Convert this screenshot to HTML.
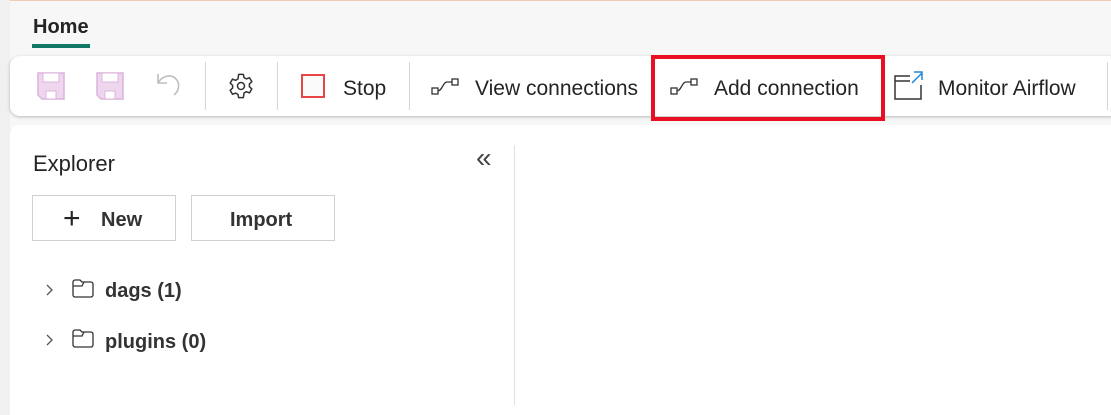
<!DOCTYPE html>
<html><head><style>
*{margin:0;padding:0;box-sizing:border-box}
body{width:1111px;height:404px;overflow:hidden;background:#f0f0f0;font-family:"Liberation Sans",sans-serif;color:#242424;position:relative}
.top{position:absolute;left:10px;top:0;right:0;height:130px;background:#f7f7f7;border-top:1px solid #f3c8b8}
.abs{position:absolute}
.t{position:absolute;font-size:21px;line-height:24px;white-space:nowrap}
.sep{position:absolute;top:62px;width:1px;height:48px;background:#d6d6d6}
.b{font-weight:bold;font-size:19px;color:#333}
</style></head><body>
<div class="top"></div>
<div class="t" style="left:33px;top:15px;font-weight:bold;font-size:20px">Home</div>
<div class="abs" style="left:32px;top:44px;width:58px;height:4px;background:#117865"></div>
<div class="abs" style="left:10px;top:56px;width:1110px;height:60px;background:#fff;border-radius:10px;box-shadow:0 1px 3px rgba(0,0,0,.25)"></div>
<svg class="abs" style="left:37px;top:72px" width="28" height="28" viewBox="0 0 28 28"><path d="M1 1h26v26H5l-4-4z" fill="#efd6ef" stroke="#dcb4dc" stroke-width="1.5"/><rect x="6" y="1" width="16" height="9" fill="#fff" stroke="#dcb4dc"/><rect x="9" y="19" width="10" height="8" fill="#fff" stroke="#dcb4dc"/></svg>
<svg class="abs" style="left:96px;top:72px" width="28" height="28" viewBox="0 0 28 28"><path d="M1 1h26v26H5l-4-4z" fill="#efd6ef" stroke="#dcb4dc" stroke-width="1.5"/><rect x="6" y="1" width="16" height="9" fill="#fff" stroke="#dcb4dc"/><rect x="9" y="19" width="10" height="8" fill="#fff" stroke="#dcb4dc"/></svg>
<svg class="abs" style="left:156px;top:72px" width="26" height="28" viewBox="0 0 26 28"><path d="M2 2v9h9M2 11C6 4 14 2 19 6c5 4 5 12-1 17" fill="none" stroke="#bdbdbd" stroke-width="1.6"/></svg>
<div class="sep" style="left:205px"></div>
<svg class="abs" style="left:227px;top:72px" width="28" height="28" viewBox="0 0 24 24"><path d="M10 2h4l.6 2.8 2 1.1 2.7-1 2 3.4-2.1 1.9v2.4l2.1 1.9-2 3.4-2.7-1-2 1.1L14 22h-4l-.6-2.8-2-1.1-2.7 1-2-3.4 2.1-1.9V11.4L2.7 9.5l2-3.4 2.7 1 2-1.1z" fill="none" stroke="#333" stroke-width="1.3" stroke-linejoin="round"/><circle cx="12" cy="12" r="3" fill="none" stroke="#333" stroke-width="1.3"/></svg>
<div class="sep" style="left:277px"></div>
<div class="abs" style="left:301px;top:74px;width:24px;height:24px;border:2px solid #e84545;background:#fafafa"></div>
<div class="t" style="left:343px;top:77px">Stop</div>
<div class="sep" style="left:409px"></div>
<svg class="abs" style="left:431px;top:78px" width="28" height="18" viewBox="0 0 28 18"><rect x="1" y="10" width="6" height="6" fill="none" stroke="#333" stroke-width="1.3"/><rect x="21" y="1" width="6" height="6" fill="none" stroke="#333" stroke-width="1.3"/><path d="M7 13c4 0 5-9 9-9h5" fill="none" stroke="#333" stroke-width="1.3"/></svg>
<div class="t" style="left:475px;top:77px">View connections</div>
<div class="abs" style="left:651px;top:55px;width:234px;height:66px;border:4px solid #e81123"></div>
<svg class="abs" style="left:670px;top:78px" width="28" height="18" viewBox="0 0 28 18"><rect x="1" y="10" width="6" height="6" fill="none" stroke="#333" stroke-width="1.3"/><rect x="21" y="1" width="6" height="6" fill="none" stroke="#333" stroke-width="1.3"/><path d="M7 13c4 0 5-9 9-9h5" fill="none" stroke="#333" stroke-width="1.3"/></svg>
<div class="t" style="left:714px;top:77px">Add connection</div>
<svg class="abs" style="left:894px;top:70px" width="30" height="30" viewBox="0 0 30 30"><path d="M16 6H1v23h26V15M1 11h15" fill="none" stroke="#333" stroke-width="1.5"/><path d="M18 13L28 3M20 2h8v8" fill="none" stroke="#1e88d8" stroke-width="1.5"/></svg>
<div class="t" style="left:938px;top:77px">Monitor Airflow</div>
<div class="sep" style="left:1107px"></div>
<div class="abs" style="left:10px;top:125px;width:1110px;height:290px;background:#fff;border-radius:10px 0 0 0"></div>
<div class="abs" style="left:514px;top:145px;width:1px;height:260px;background:#e0e0e0"></div>
<div class="t" style="left:33px;top:152px;font-size:22px">Explorer</div>
<div class="t" style="left:476px;top:146px;font-size:28px;color:#444">«</div>
<div class="abs" style="left:32px;top:195px;width:144px;height:46px;border:1px solid #d1d1d1"></div>
<div class="t" style="left:63px;top:206px;font-size:30px;font-weight:300;line-height:26px">+</div>
<div class="t b" style="left:101px;top:208px;font-size:20px">New</div>
<div class="abs" style="left:191px;top:195px;width:144px;height:46px;border:1px solid #d1d1d1"></div>
<div class="t b" style="left:230px;top:208px;font-size:20px">Import</div>
<svg class="abs" style="left:45px;top:283px" width="10" height="14"><path d="M2 2l5 5-5 5" fill="none" stroke="#555" stroke-width="1.3"/></svg>
<svg class="abs" style="left:72px;top:279px" width="22" height="20" viewBox="0 0 22 20"><path d="M1 3c0-1 1-2 2-2h5l2 2h9c1 0 2 1 2 2v11c0 1-1 2-2 2H3c-1 0-2-1-2-2zM1 7h9l2-4" fill="none" stroke="#333" stroke-width="1.3"/></svg>
<div class="t b" style="left:105px;top:279px;font-size:20px">dags (1)</div>
<svg class="abs" style="left:45px;top:333px" width="10" height="14"><path d="M2 2l5 5-5 5" fill="none" stroke="#555" stroke-width="1.3"/></svg>
<svg class="abs" style="left:72px;top:329px" width="22" height="20" viewBox="0 0 22 20"><path d="M1 3c0-1 1-2 2-2h5l2 2h9c1 0 2 1 2 2v11c0 1-1 2-2 2H3c-1 0-2-1-2-2zM1 7h9l2-4" fill="none" stroke="#333" stroke-width="1.3"/></svg>
<div class="t b" style="left:105px;top:330px;font-size:20px">plugins (0)</div>
</body></html>
